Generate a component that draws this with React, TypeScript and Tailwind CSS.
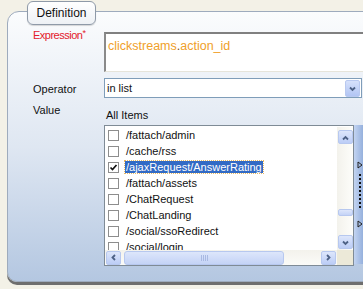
import React from "react";

// ---------- data ----------

type Item = { label: string; checked?: boolean; selected?: boolean };

const items: Item[] = [
  { label: "/fattach/admin" },
  { label: "/cache/rss" },
  { label: "/ajaxRequest/AnswerRating", checked: true, selected: true },
  { label: "/fattach/assets" },
  { label: "/ChatRequest" },
  { label: "/ChatLanding" },
  { label: "/social/ssoRedirect" },
  { label: "/social/login" },
];

// ---------- helpers ----------

function Chevron({ dir }: { dir: "up" | "down" | "left" | "right" }) {
  const pts: Record<string, string> = {
    up: "2,6.5 4.5,4 7,6.5",
    down: "2,3.5 4.5,6 7,3.5",
    left: "6,2 3.5,4.5 6,7",
    right: "3,2 5.5,4.5 3,7",
  };
  return (
    <svg width="9" height="9" viewBox="0 0 9 9">
      <polyline points={pts[dir]} fill="none" stroke="#4d6185" strokeWidth="1.8" />
    </svg>
  );
}

function ScrollButton({ dir }: { dir: "up" | "down" | "left" | "right" }) {
  return (
    <div className="w-[15px] h-[14px] rounded-[2px] border border-[#b7c8ef] bg-gradient-to-b from-[#dde6fb] to-[#bccdf6] flex items-center justify-center">
      <Chevron dir={dir} />
    </div>
  );
}

function CheckBox({ checked }: { checked?: boolean }) {
  return (
    <div className="w-[11px] h-[11px] border border-[#8d8d8d] bg-white shrink-0 flex items-center justify-center">
      {checked && (
        <svg width="9" height="9" viewBox="0 0 9 9">
          <polyline points="1.5,4.5 3.5,6.5 7.5,2" fill="none" stroke="#111" strokeWidth="1.7" />
        </svg>
      )}
    </div>
  );
}

// ---------- component ----------

export default function App() {
  return (
    <div
      className="relative w-[363px] h-[289px] overflow-hidden bg-[#f3f1e7] text-[11px] text-[#111]"
      style={{ fontFamily: '"Liberation Sans", Arial, sans-serif' }}
    >
      {/* Tab */}
      <div className="absolute left-[27px] top-[1px] z-10 w-[69px] h-[24px] rounded-[6px] border border-[#8f9aa8] bg-gradient-to-b from-white to-[#eef1f5] flex items-center justify-center text-[12px] shadow-[0_1px_1px_rgba(0,0,0,0.15)]">
        Definition
      </div>

      {/* Panel */}
      <div className="mt-[11px] ml-[7px] w-[380px] h-[271px] rounded-tl-[12px] rounded-bl-[10px] border border-[#9eabbd] bg-gradient-to-b from-[#fbfcfd] via-[#dfe7f2] to-[#b4c7e1] shadow-[0_3px_0_#6e6e6e] pt-[20px] pl-[25px]">
        {/* Expression */}
        <div className="flex">
          <div className="w-[71px] -mt-[5px] text-[#e3202b] tracking-[-0.5px]">
            Expression<span className="text-[9px] align-top">*</span>
          </div>
          <div className="w-[270px] h-[40px] bg-white border-t-2 border-l-2 border-t-[#808080] border-l-[#8a8a8a] border-b border-b-[#e6e4da] pl-[2px] pt-[4px] text-[12.5px] leading-[16px] text-[#f0a02a]">
            clickstreams<span className="text-[#7a5010]">.</span>action_id
          </div>
        </div>

        {/* Operator */}
        <div className="flex mt-[6px] items-center">
          <div className="w-[71px] pt-[2px]">Operator</div>
          <div className="w-[258px] h-[20px] border border-[#7f9db9] bg-white flex items-center pl-[2px]">
            <span className="flex-1">in list</span>
            <div className="w-[15px] h-[17px] mr-[1px] rounded-[2px] border border-[#b9c9f0] bg-gradient-to-b from-[#d6e1fb] to-[#b2c5f4] flex items-center justify-center">
              <Chevron dir="down" />
            </div>
          </div>
        </div>

        {/* Value */}
        <div className="flex mt-[3px]">
          <div className="w-[71px] pt-[1px]">Value</div>
          <div className="flex flex-col">
            <div className="h-[24px] pt-[8px] pl-[2px] leading-[12px]">All Items</div>
            <div className="flex">
              {/* List box */}
              <div className="w-[250px] h-[141px] border border-[#7f8b96] bg-white flex flex-col">
                <div className="flex h-[123px] mt-[1px]">
                  <div className="flex-1 overflow-hidden">
                    {items.map((it) => (
                      <div key={it.label} className="h-[16px] flex items-center pl-[3px] gap-[6px] whitespace-nowrap">
                        <CheckBox checked={it.checked} />
                        <span
                          className={
                            it.selected
                              ? "bg-[#316ac5] text-white px-[1px] leading-[12px] outline-1 outline-dotted outline-[#e7b861]"
                              : "px-[1px]"
                          }
                        >
                          {it.label}
                        </span>
                      </div>
                    ))}
                  </div>
                  {/* Vertical scrollbar */}
                  <div className="w-[16px] bg-gradient-to-r from-[#f3f2ec] to-[#fdfdfa] flex flex-col items-center pt-[3px] pb-[1px]">
                    <ScrollButton dir="up" />
                    <div className="flex-1" />
                    <div className="w-[15px] h-[7px] rounded-[2px] border border-[#b7c8ef] bg-gradient-to-b from-[#dde6fb] to-[#c4d3f6]" />
                    <div className="h-[19px]" />
                    <ScrollButton dir="down" />
                  </div>
                </div>
                {/* Horizontal scrollbar */}
                <div className="flex h-[16px]">
                  <div className="flex-1 bg-gradient-to-b from-[#f3f2ec] to-[#fbfbf8] flex items-center pl-[1px] pr-[1px] gap-[3px]">
                    <ScrollButton dir="left" />
                    <div className="w-[160px] h-[14px] rounded-[3px] border border-[#b7c8ef] bg-gradient-to-b from-[#dde6fb] to-[#c4d3f6] flex items-center justify-center">
                      <div className="flex gap-[1px]">
                        <div className="w-[1px] h-[6px] bg-[#a9b9e2]" />
                        <div className="w-[1px] h-[6px] bg-[#a9b9e2]" />
                        <div className="w-[1px] h-[6px] bg-[#a9b9e2]" />
                        <div className="w-[1px] h-[6px] bg-[#a9b9e2]" />
                      </div>
                    </div>
                    <div className="flex-1" />
                    <ScrollButton dir="right" />
                  </div>
                  <div className="w-[16px] bg-[#ece9d8]" />
                </div>
              </div>

              {/* Splitter strip */}
              <div className="w-[12px] h-[139px] bg-gradient-to-r from-[#c3d4f1] to-[#87a5d6] flex flex-col items-center pt-[36px]">
                <svg width="6" height="8" viewBox="0 0 6 8">
                  <polygon points="1,1 5,4 1,7" fill="none" stroke="#222" strokeWidth="1" />
                </svg>
                <div className="mt-[5px] flex flex-col gap-[2px]">
                  {Array.from({ length: 9 }).map((_, i) => (
                    <div key={i} className="w-[2px] h-[2px] bg-[#111]" />
                  ))}
                </div>
                <div className="mt-[12px]">
                  <svg width="6" height="8" viewBox="0 0 6 8">
                    <polygon points="1,1 5,4 1,7" fill="none" stroke="#222" strokeWidth="1" />
                  </svg>
                </div>
              </div>
            </div>
          </div>
        </div>
      </div>
    </div>
  );
}
